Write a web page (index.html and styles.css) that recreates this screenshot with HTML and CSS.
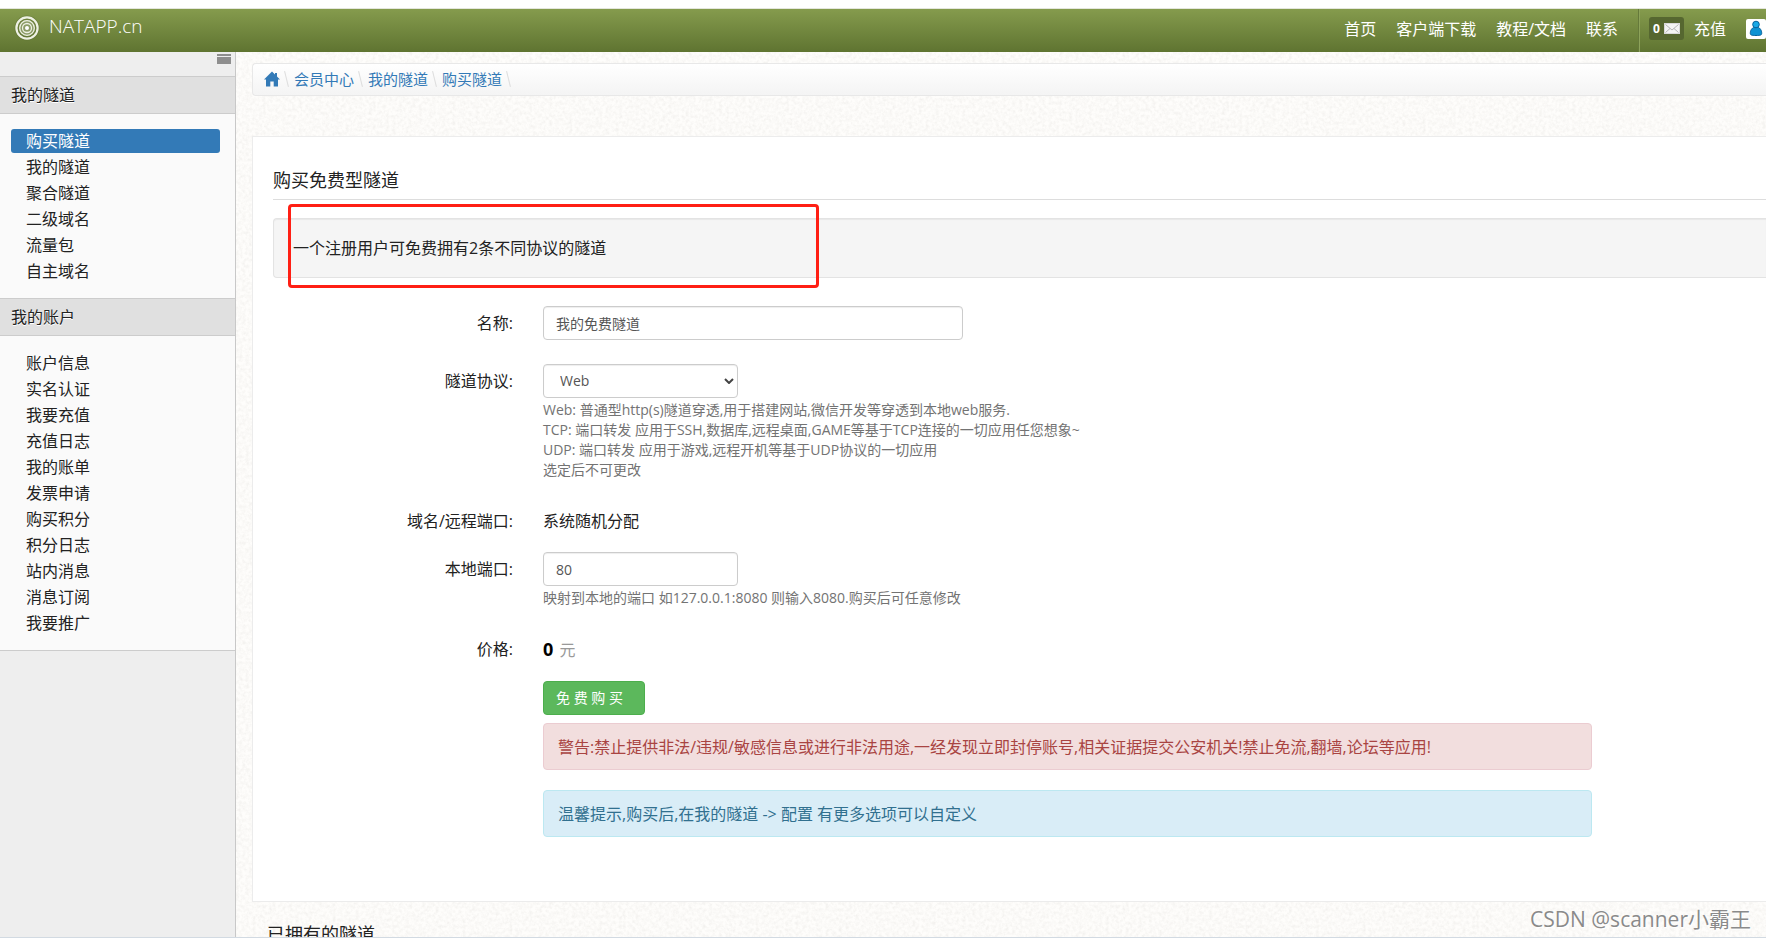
FILE: index.html
```
<!DOCTYPE html>
<html lang="zh-CN">
<head>
<meta charset="utf-8">
<title>购买隧道 - NATAPP.cn</title>
<link rel="stylesheet" href="styles.css">
</head>
<body>
<header class="topbar">
  <a class="brand" href="#">
    <svg class="brand-logo" viewBox="0 0 26 26" aria-hidden="true">
      <circle cx="13" cy="13" r="12.5" fill="#5a6d30" opacity=".45"/>
      <circle cx="13" cy="13" r="8" fill="#dfe4cf" opacity=".3"/>
      <g fill="none" stroke="#eef1e4">
        <circle cx="13" cy="13" r="10.600" stroke-width="2.200"/>
        <circle cx="13" cy="13" r="7.300" stroke-width="1.300"/>
        <circle cx="13" cy="13" r="4.500" stroke-width="1.300"/>
      </g>
      <circle cx="13" cy="13" r="2" fill="#fff"/>
    </svg>
    <span class="brand-name">NATAPP.cn</span>
  </a>
  <nav class="topnav">
    <a href="#">首页</a>
    <a href="#">客户端下载</a>
    <a href="#">教程/文档</a>
    <a href="#">联系</a>
  </nav>
  <div class="account">
    <a class="mail" href="#" aria-label="站内消息">
      <span>0</span>
      <svg class="mail-icon" viewBox="0 0 16 11" aria-hidden="true">
        <rect x=".5" y=".5" width="15" height="10" fill="#f4f4f4" stroke="#d9d9d9"/>
        <path d="M1.500 1.500 8 7l6.500-5.500M1.500 9.500 6 5.500M14.500 9.500 10 5.500" fill="none" stroke="#b5b5b5"/>
      </svg>
    </a>
    <a href="#">充值</a>
    <a class="avatar" href="#" aria-label="用户">
      <svg viewBox="0 0 20 20" aria-hidden="true">
        <path d="M7.600 8.300C4.500 10.500 4.300 12.500 4.300 14.500c0 1.500 1.200 2 5.700 2s5.700-.5 5.700-2c0-2-.2-4-3.300-6.200z" fill="#0d92d2" stroke="#07619b"/>
        <circle cx="10" cy="5.500" r="3.300" fill="#18a9e6" stroke="#07619b"/>
      </svg>
    </a>
  </div>
</header>

<div class="layout">
  <aside class="sidebar">
    <div class="sidebar-tools">
      <button class="collapse" type="button" aria-label="收起菜单"></button>
    </div>
    <h2 class="menu-title">我的隧道</h2>
    <ul class="menu">
      <li><a class="active" href="#">购买隧道</a></li>
      <li><a href="#">我的隧道</a></li>
      <li><a href="#">聚合隧道</a></li>
      <li><a href="#">二级域名</a></li>
      <li><a href="#">流量包</a></li>
      <li><a href="#">自主域名</a></li>
    </ul>
    <h2 class="menu-title">我的账户</h2>
    <ul class="menu">
      <li><a href="#">账户信息</a></li>
      <li><a href="#">实名认证</a></li>
      <li><a href="#">我要充值</a></li>
      <li><a href="#">充值日志</a></li>
      <li><a href="#">我的账单</a></li>
      <li><a href="#">发票申请</a></li>
      <li><a href="#">购买积分</a></li>
      <li><a href="#">积分日志</a></li>
      <li><a href="#">站内消息</a></li>
      <li><a href="#">消息订阅</a></li>
      <li><a href="#">我要推广</a></li>
    </ul>
  </aside>

  <main class="content">
    <svg class="paper" aria-hidden="true">
      <filter id="grain" x="0" y="0" width="100%" height="100%">
        <feTurbulence type="fractalNoise" baseFrequency="0.3" numOctaves="4" seed="7"/>
        <feColorMatrix values="0 0 0 0 .55  0 0 0 0 .53  0 0 0 0 .5  .25 .25 0 0 -.2"/>
      </filter>
      <rect width="100%" height="100%" filter="url(#grain)"/>
    </svg>
    <nav class="crumbs" aria-label="路径">
      <a class="home" href="#" aria-label="首页">
        <svg viewBox="0 0 16 16" aria-hidden="true"><path d="M8 .5 11 3.500V2h2v3.500L16 8.500h-2V15.500H9.700V10.500H6.300v5H2V8.500H0z" fill="#337ab7"/></svg>
      </a>
      <a href="#">会员中心</a>
      <a href="#">我的隧道</a>
      <a href="#">购买隧道</a>
    </nav>

    <section class="panel">
      <h1 class="panel-title">购买免费型隧道</h1>
      <div class="well">一个注册用户可免费拥有2条不同协议的隧道
        <span class="marker"></span>
      </div>
      <form class="form">
        <div class="row">
          <label for="name">名称:</label>
          <div class="field"><input id="name" class="control wide" type="text" value="我的免费隧道"></div>
        </div>
        <div class="row protocol">
          <label for="protocol">隧道协议:</label>
          <div class="field">
            <div class="select">
              <select id="protocol" class="control">
                <option>Web</option>
                <option>TCP</option>
                <option>UDP</option>
              </select>
              <svg class="chevron" viewBox="0 0 10 6" aria-hidden="true"><path d="M1 1l4 4 4-4" fill="none" stroke="#444" stroke-width="2"/></svg>
            </div>
            <p class="help">Web: 普通型http(s)隧道穿透,用于搭建网站,微信开发等穿透到本地web服务.<br>TCP: 端口转发 应用于SSH,数据库,远程桌面,GAME等基于TCP连接的一切应用任您想象~<br>UDP: 端口转发 应用于游戏,远程开机等基于UDP协议的一切应用<br>选定后不可更改</p>
          </div>
        </div>
        <div class="row domain">
          <span class="row-label">域名/远程端口:</span>
          <div class="field static">系统随机分配</div>
        </div>
        <div class="row port">
          <label for="port">本地端口:</label>
          <div class="field">
            <input id="port" class="control" type="text" value="80">
            <p class="help">映射到本地的端口 如127.0.0.1:8080 则输入8080.购买后可任意修改</p>
          </div>
        </div>
        <div class="row price-row">
          <span class="row-label">价格:</span>
          <div class="field static"><strong class="price">0</strong> <span class="unit">元</span></div>
        </div>
        <div class="actions">
          <button class="buy" type="button">免 费 购 买</button>
          <div class="alert danger">警告:禁止提供非法/违规/敏感信息或进行非法用途,一经发现立即封停账号,相关证据提交公安机关!禁止免流,翻墙,论坛等应用!</div>
          <div class="alert info">温馨提示,购买后,在我的隧道 -&gt; 配置 有更多选项可以自定义</div>
        </div>
      </form>
    </section>
    <h2 class="owned">已拥有的隧道</h2>
  </main>
</div>
<div class="watermark">CSDN @scanner小霸王</div>
</body>
</html>
```

FILE: styles.css
```
* { box-sizing: border-box; }

body {
  margin: 0;
  height: 100vh;
  display: flex;
  flex-direction: column;
  overflow: hidden;
  padding-top: 8px;
  border-bottom: 1px solid #d2dae2;
  background: #fff;
  color: #222;
  font: 16px/24px "Open Sans", "Noto Sans CJK SC", sans-serif;
}

a { color: inherit; text-decoration: none; }
h1, h2, p, ul { margin: 0; padding: 0; font-weight: 400; }
ul { list-style: none; }
svg { display: block; }

/* Top bar */
.topbar {
  display: flex;
  flex: none;
  height: 44px;
  border-top: 1px solid #e3e6dc;
  background: linear-gradient(#859b4d, #5f7431);
  color: #fff;
}
.brand { display: flex; align-items: flex-start; gap: 9px; padding: 6px 0 0 14px; }
.brand-logo { width: 26px; height: 26px; }
.brand-name { font-size: 19px; font-weight: 300; line-height: 22px; }
.topnav { display: flex; align-items: center; gap: 20px; margin-left: auto; padding-right: 20px; padding-bottom: 4px; }
.account {
  display: flex;
  align-items: center;
  gap: 10px;
  padding: 0 0 4px 10px;
  border-left: 1px solid #65793a;
  box-shadow: inset 1px 0 #8da35a;
}
.mail {
  display: flex;
  align-items: center;
  gap: 4px;
  height: 23px;
  padding: 0 4px;
  border-radius: 3px;
  background: #566730;
  font-size: 12px;
  font-weight: 700;
}
.mail-icon { width: 16px; height: 11px; }
.avatar { width: 20px; height: 20px; margin-left: 10px; border-radius: 2px; background: #fff; overflow: hidden; }
.avatar svg { width: 20px; height: 20px; }

.layout { display: flex; flex: 1; min-height: 0; }

/* Sidebar */
.sidebar {
  flex: 0 0 236px;
  border-right: 1px solid #c8c8c8;
  background: #eee;
}
.sidebar-tools { display: flex; justify-content: flex-end; height: 24px; padding: 2px 4px; }
.collapse {
  width: 14px;
  height: 10px;
  padding: 0;
  border: 0;
  background: linear-gradient(#8e8e8e 2px, #eee 2px, #eee 3px, #8e8e8e 3px);
}
.menu-title {
  padding: 6px 11px;
  border: solid #ccc;
  border-width: 1px 0;
  background: #e0e0e0;
  font-size: 16px;
  text-shadow: 0 1px #fff;
}
.menu { padding: 15px 15px 13px 11px; background: #fafafa; }
.menu:last-child { border-bottom: 1px solid #ccc; }
.menu a { display: block; margin-bottom: 2px; padding: 0 15px; border-radius: 3px; }
.menu .active { background: #337ab7; color: #fff; }

/* Content */
.content {
  position: relative;
  z-index: 0;
  flex: 1;
  min-width: 0;
  padding: 11px 0 0 16px;
  background: #fefdfb;
}
.paper { position: absolute; inset: 0; z-index: -1; width: 100%; height: 100%; }
.crumbs {
  display: flex;
  align-items: center;
  height: 33px;
  padding: 0 0 2px 11px;
  border: 1px solid #e8e8e8;
  border-right: 0;
  border-radius: 4px 0 0 4px;
  background: linear-gradient(#fff, #f4f4f4);
  color: #337ab7;
  font-size: 15px;
}
.crumbs a { display: flex; align-items: center; }
.crumbs a::after {
  content: "";
  width: 1px;
  height: 16px;
  margin: 0 7px 0 6px;
  background: #ddd;
  transform: rotate(-14deg);
}
.home svg { width: 16px; height: 16px; }
.panel {
  margin-top: 40px;
  padding: 31px 0 64px 20px;
  border: 1px solid #ececec;
  border-right: 0;
  background: #fff;
}
.panel-title { padding-bottom: 7px; border-bottom: 1px solid #ddd; font-size: 18px; }
.well {
  position: relative;
  margin-top: 18px;
  padding: 17px 19px;
  border: 1px solid #e3e3e3;
  border-right: 0;
  border-radius: 4px 0 0 4px;
  background: #f5f5f5;
  box-shadow: inset 0 1px 1px #e8e8e8;
}
/* Highlight frame drawn over the notice */
.marker {
  position: absolute;
  top: -15px;
  left: 14px;
  width: 531px;
  height: 84px;
  border: 3px solid #ff1f14;
  border-radius: 4px;
}

/* Form */
.form { display: flex; flex-direction: column; margin-top: 28px; }
.row { display: grid; grid-template-columns: 240px 1fr; column-gap: 30px; }
.row label, .row-label { padding-top: 5px; text-align: right; }
.static { padding-top: 5px; }
.control {
  display: block;
  width: 195px;
  height: 34px;
  padding: 6px 12px;
  border: 1px solid #ccc;
  border-radius: 4px;
  background: #fff;
  box-shadow: inset 0 1px 1px #eee;
  color: #555;
  font: 14px/20px "Open Sans", "Noto Sans CJK SC", sans-serif;
}
.wide { width: 420px; }
.select { position: relative; width: 195px; }
.select .control { appearance: none; padding-left: 16px; }
.chevron { position: absolute; top: 14px; right: 4px; width: 10px; height: 6px; pointer-events: none; }
.help { margin-top: 2px; color: #737373; font-size: 14px; line-height: 20px; }
.protocol { margin-top: 24px; }
.domain { margin-top: 24px; }
.port { margin-top: 19px; }
.price-row { margin-top: 24px; }
.price { color: #000; font-size: 18px; }
.unit { margin-left: 2px; color: #999; }
.actions { display: flex; flex-direction: column; align-items: flex-start; margin-top: 19px; padding: 0 174px 0 270px; }
.buy {
  width: 102px;
  height: 34px;
  padding: 0 12px;
  border: 1px solid #4cae4c;
  border-radius: 4px;
  background: #5cb85c;
  color: #fff;
  font: 14px/20px "Open Sans", "Noto Sans CJK SC", sans-serif;
  text-align: left;
}
.alert { align-self: stretch; padding: 11px 14px 10px; border: 1px solid; border-radius: 4px; }
.danger { margin-top: 8px; border-color: #ebccd1; background: #f2dede; color: #a94442; }
.info { margin-top: 20px; border-color: #bce8f1; background: #d9edf7; color: #31708f; }
.owned { padding: 20px 0 0 15px; font-size: 18px; white-space: nowrap; }

.watermark {
  position: absolute;
  right: 15px;
  bottom: 4px;
  color: #8a8a8a;
  font-size: 21px;
  line-height: 30px;
  text-shadow: 1px 1px #fff;
}
```
